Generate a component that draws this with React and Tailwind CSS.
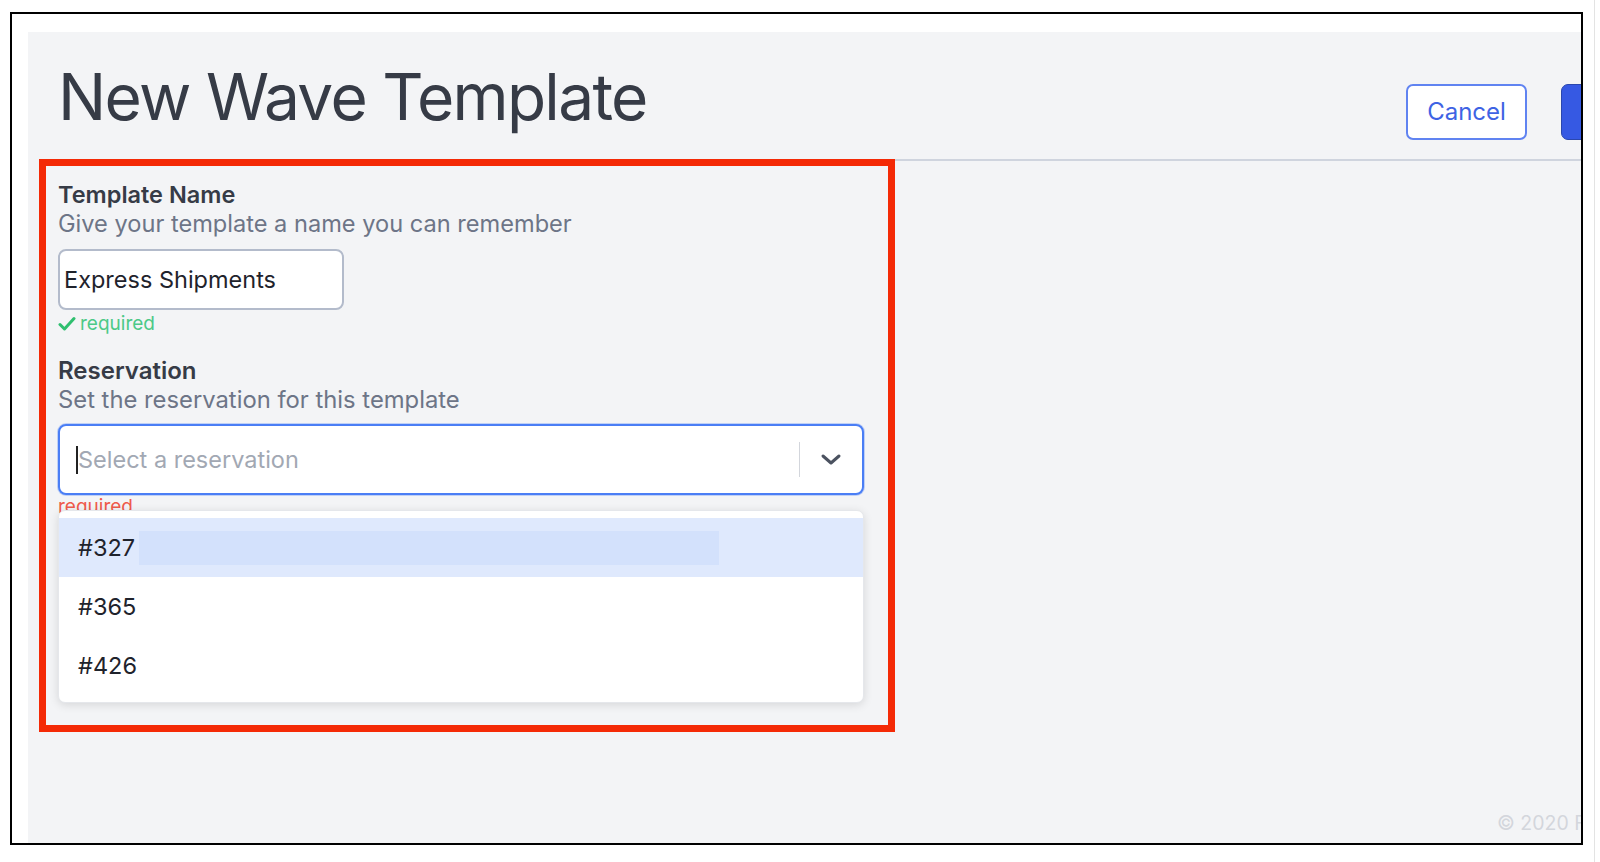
import React from 'react';

const font = { fontFamily: 'Inter, "Noto Sans", sans-serif' };

const Chevron = () => (
    <svg width="22" height="13" viewBox="0 0 22 13" fill="none">
        <path
            d="M3 3 L11 10 L19 3"
            stroke="#4b5260"
            strokeWidth="3"
            strokeLinecap="round"
            strokeLinejoin="round"
        />
    </svg>
);

const options = ['#327', '#365', '#426'];

const App = () => {
    return (
        <div className="w-full h-[862px] bg-white pl-[10px] pt-[12px]" style={font}>
            <div className="w-[1573px] h-[833px] border-2 border-black pl-[16px] pt-[18px] flex">
                <div className="relative flex-1 bg-[#f3f4f6] overflow-hidden flex flex-col">
                    {/* Header */}
                    <div className="flex items-start h-[129px] ml-[12px] border-b-2 border-[#cfd4de]">
                        <h1 className="pl-[18px] mt-[33px] text-[64px] leading-none text-[#363b46] tracking-[-1.7px] whitespace-nowrap">
                            New Wave Template
                        </h1>
                        <div className="ml-auto mt-[52px] mr-[-120px] flex gap-[34px]">
                            <button className="w-[121px] h-[56px] rounded-[7px] border-2 border-[#6083f1] bg-white text-[24px] text-[#3e63e4]">
                                Cancel
                            </button>
                            <button className="w-[140px] h-[56px] rounded-[7px] border border-[#2b47ad] bg-[#3659e3] text-[22px] text-white">
                                Save
                            </button>
                        </div>
                    </div>

                    {/* Form */}
                    <div className="pl-[30px] pt-[20px]">
                        <p className="text-[23.5px] leading-[28px] font-semibold text-[#363b46]">
                            Template Name
                        </p>
                        <p className="text-[23.6px] leading-[29px] text-[#6d7587]">
                            Give your template a name you can remember
                        </p>
                        <div className="mt-[11px] w-[286px] h-[61px] rounded-[8px] border-2 border-[#b3bbcb] bg-white flex items-center px-[4px] text-[23.5px] text-[#1f232c]">
                            Express Shipments
                        </div>
                        <div className="mt-[2px] flex items-center gap-[4px] text-[19px] leading-[24px] text-[#4cc987]">
                            <svg width="18" height="16" viewBox="0 0 18 16" fill="none">
                                <path
                                    d="M2 8.5 L6.5 13 L16 2.5"
                                    stroke="#2fbf6f"
                                    strokeWidth="3"
                                    strokeLinecap="round"
                                    strokeLinejoin="round"
                                />
                            </svg>
                            required
                        </div>

                        <p className="mt-[21px] text-[24px] leading-[28px] font-semibold text-[#363b46]">
                            Reservation
                        </p>
                        <p className="text-[23.8px] leading-[29px] text-[#6d7587]">
                            Set the reservation for this template
                        </p>

                        <div className="relative w-[806px] mt-[10px]">
                            <div className="h-[71px] rounded-[8px] border-2 border-[#4a7ef5] shadow-[0_0_0_1px_rgba(74,126,245,0.3)] bg-white flex items-center">
                                <div className="flex-1 flex items-center pl-[16px]">
                                    <span className="w-[2px] h-[28px] bg-[#222]" />
                                    <span className="text-[23.5px] text-[#a2a8b3]">
                                        Select a reservation
                                    </span>
                                </div>
                                <span className="w-px h-[35px] bg-[#d3d6dc]" />
                                <span className="w-[62px] flex justify-center">
                                    <Chevron />
                                </span>
                            </div>
                            <p className="text-[19px] leading-[24px] text-[#ef5a4b]">required</p>

                            {/* Dropdown menu */}
                            <div className="absolute left-0 top-[86px] w-[806px] rounded-[7px] bg-white py-[7px] shadow-[0_2px_10px_rgba(0,0,0,0.12)] border border-[#e5e7eb]">
                                {options.map((opt, i) => (
                                    <div
                                        key={opt}
                                        className={
                                            i === 0
                                                ? 'h-[59px] flex items-center pl-[19px] bg-[#dfe9fd] text-[23.5px] text-[#1f232c]'
                                                : 'h-[59px] flex items-center pl-[19px] text-[23.5px] text-[#1f232c]'
                                        }
                                    >
                                        {opt}
                                        {i === 0 && (
                                            <span className="ml-[4px] w-[580px] h-[34px] bg-[#d3e1fc]" />
                                        )}
                                    </div>
                                ))}
                            </div>
                        </div>
                    </div>

                    {/* Footer */}
                    <div className="mt-auto pb-[6px] pl-[1469px] whitespace-nowrap text-[19.5px] leading-[28px] text-[#d3d6dc]">
                        © 2020 Fulfillment Co.
                    </div>

                    {/* Annotation box */}
                    <div className="absolute left-[11px] top-[127px] w-[856px] h-[573px] border-[7px] border-[#f42a06] pointer-events-none" />
                </div>
            </div>
            <div className="absolute left-[1594px] top-0 w-px h-[862px] bg-[#e3e3e3]" />
        </div>
    );
};

export default App;
